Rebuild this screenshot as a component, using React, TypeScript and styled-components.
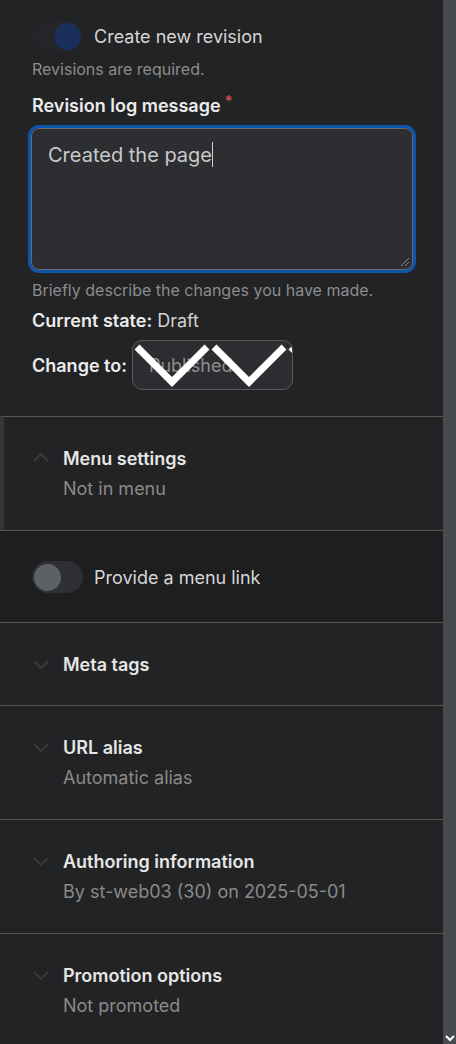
import styled, { createGlobalStyle } from "styled-components";

const GlobalStyle = createGlobalStyle`
  html, body {
    margin: 0;
    padding: 0;
    background: #222325;
  }
  body {
    font-family: Inter, "Noto Sans", "Liberation Sans", sans-serif;
    color: #d9d9d9;
    -webkit-font-smoothing: antialiased;
  }
`;

const Page = styled.div`
  display: flex;
  width: 456px;
  height: 1044px;
  overflow: hidden;
`;

const Main = styled.div`
  width: 443px;
  display: flex;
  flex-direction: column;
`;

const ScrollTrack = styled.div`
  width: 13px;
  background: #474b4f;
  display: flex;
  flex-direction: column;
  justify-content: flex-end;
  align-items: center;
  padding-bottom: 2px;
`;

const Form = styled.div`
  padding: 20px 27px 26px 32px;
  display: flex;
  flex-direction: column;
`;

const ToggleRow = styled.div`
  display: flex;
  align-items: center;
  gap: 11px;
  height: 32px;
`;

const Track = styled.span<{ on?: boolean }>`
  width: 51px;
  height: 32px;
  border-radius: 16px;
  background: ${(p) => (p.on ? "#242528" : "#2e3034")};
  display: flex;
  align-items: center;
  justify-content: ${(p) => (p.on ? "flex-end" : "flex-start")};
  padding: 0 2px;
  box-sizing: border-box;
`;

const Knob = styled.span<{ on?: boolean }>`
  width: 27px;
  height: 27px;
  border-radius: 50%;
  background: ${(p) => (p.on ? "#1b2f5c" : "#5d6064")};
`;

const ToggleLabel = styled.span`
  font-size: 18px;
  color: #d6d6d6;
`;

const Hint = styled.div<{ top?: number }>`
  font-size: 16px;
  line-height: 20px;
  color: #8c8c8c;
  margin-top: ${(p) => p.top ?? 0}px;
`;

const Label = styled.div`
  margin-top: 15px;
  font-size: 18px;
  line-height: 24px;
  font-weight: 600;
  color: #ececec;
  display: flex;
  align-items: flex-start;
`;

const Required = styled.span`
  color: #d24a5a;
  font-size: 15px;
  line-height: 14px;
  margin-left: 4px;
`;

const FocusRing = styled.div`
  margin-top: 7px;
  margin-left: -4px;
  border: 3px solid #0b55ad;
  border-radius: 11px;
  width: 388px;
  box-sizing: border-box;
`;

const TextBox = styled.div`
  position: relative;
  height: 142px;
  border: 1px solid #6b6b6b;
  border-radius: 8px;
  background: #2c2e31;
  padding: 13px 16px;
  box-sizing: border-box;
  font-size: 20px;
  line-height: 26px;
  color: #c9c9c9;
`;

const Caret = styled.span`
  display: inline-block;
  width: 1px;
  height: 25px;
  background: #d0d0d0;
  vertical-align: -5px;
`;

const Grip = styled.svg`
  position: absolute;
  right: 2px;
  bottom: 2px;
`;

const StateLine = styled.div`
  margin-top: 9px;
  font-size: 18px;
  line-height: 24px;
  color: #d2d2d2;
  b {
    font-weight: 600;
    color: #ececec;
  }
`;

const ChangeRow = styled.div`
  margin-top: 7px;
  display: flex;
  align-items: center;
  gap: 5px;
`;

const ChangeLabel = styled.span`
  font-size: 18px;
  font-weight: 600;
  color: #ececec;
`;

const Select = styled.div`
  position: relative;
  width: 161px;
  height: 50px;
  box-sizing: border-box;
  border: 1px solid #5a5a5a;
  border-radius: 10px;
  background: #2b2d30;
  overflow: hidden;
  display: flex;
  align-items: center;
  padding-left: 16px;
  font-size: 18px;
  color: #8f8f8f;
`;

const ArrowTiles = styled.svg`
  position: absolute;
  left: 0;
  top: 0;
`;

const Section = styled.div<{ tone?: "dark" | "open" }>`
  border-top: 1px solid #57574f;
  background: ${(p) => (p.tone === "dark" ? "#1d1e20" : "#222325")};
  border-left: ${(p) => (p.tone === "open" ? "4px solid #34363a" : "0")};
  padding: ${(p) => (p.tone === "dark" ? "30px 32px 29px" : "29px 32px 29px")};
  padding-left: ${(p) => (p.tone === "open" ? "28px" : "32px")};
  display: flex;
  flex-direction: ${(p) => (p.tone === "dark" ? "row" : "column")};
`;

const Summary = styled.div`
  display: flex;
  align-items: center;
  gap: 13px;
  height: 24px;
`;

const Chevron = styled.svg`
  flex: none;
`;

const Title = styled.span`
  font-size: 18px;
  font-weight: 600;
  color: #e6e6e6;
`;

const Sub = styled.div`
  margin-top: 7px;
  margin-left: 31px;
  font-size: 18px;
  line-height: 24px;
  color: #8a8a8a;
`;

function Chev({ up }: { up?: boolean }) {
  return (
    <Chevron width="18" height="18" viewBox="0 0 18 18">
      <path
        d={up ? "M2 12 L9 5 L16 12" : "M2 6 L9 13 L16 6"}
        fill="none"
        stroke="#38393c"
        strokeWidth="2"
      />
    </Chevron>
  );
}

const sections = [
  { title: "Meta tags" },
  { title: "URL alias", sub: "Automatic alias" },
  { title: "Authoring information", sub: "By st-web03 (30) on 2025-05-01" },
  { title: "Promotion options", sub: "Not promoted" },
];

function App() {
  return (
    <Page>
      <GlobalStyle />
      <Main>
        <Form>
          <ToggleRow>
            <Track on>
              <Knob on />
            </Track>
            <ToggleLabel>Create new revision</ToggleLabel>
          </ToggleRow>
          <Hint top={7}>Revisions are required.</Hint>
          <Label>
            Revision log message<Required>*</Required>
          </Label>
          <FocusRing>
            <TextBox>
              Created the page
              <Caret />
              <Grip width="12" height="12" viewBox="0 0 12 12">
                <path d="M11 3 L3 11 M11 7 L7 11" stroke="#8a8a8a" strokeWidth="1" />
              </Grip>
            </TextBox>
          </FocusRing>
          <Hint top={7}>Briefly describe the changes you have made.</Hint>
          <StateLine>
            <b>Current state:</b> Draft
          </StateLine>
          <ChangeRow>
            <ChangeLabel>Change to:</ChangeLabel>
            <Select>
              Published
              <ArrowTiles width="161" height="50" viewBox="0 0 161 50">
                {[4, 81, 158].map((x) => (
                  <polyline
                    key={x}
                    points={`${x},6 ${x + 35},41 ${x + 70},6`}
                    fill="none"
                    stroke="#ffffff"
                    strokeWidth="7"
                  />
                ))}
              </ArrowTiles>
            </Select>
          </ChangeRow>
        </Form>

        <Section tone="open">
          <Summary>
            <Chev up />
            <Title>Menu settings</Title>
          </Summary>
          <Sub>Not in menu</Sub>
        </Section>

        <Section tone="dark">
          <ToggleRow>
            <Track>
              <Knob />
            </Track>
            <ToggleLabel>Provide a menu link</ToggleLabel>
          </ToggleRow>
        </Section>

        {sections.map((s) => (
          <Section key={s.title}>
            <Summary>
              <Chev />
              <Title>{s.title}</Title>
            </Summary>
            {s.sub ? <Sub>{s.sub}</Sub> : null}
          </Section>
        ))}
      </Main>
      <ScrollTrack>
        <svg width="10" height="8" viewBox="0 0 10 8">
          <path d="M1 2 L5 6 L9 2" fill="none" stroke="#ffffff" strokeWidth="2" />
        </svg>
      </ScrollTrack>
    </Page>
  );
}

export default App;
